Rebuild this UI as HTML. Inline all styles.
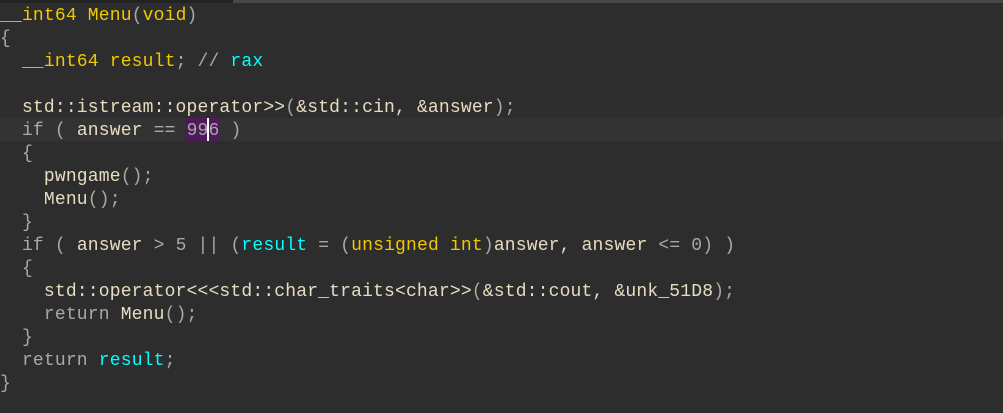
<!DOCTYPE html>
<html><head><style>
html,body{margin:0;padding:0;background:#2d2d2d;width:1003px;height:413px;overflow:hidden}
.top{position:absolute;left:0;top:0;width:1003px;height:3px;background:#222}
.top2{position:absolute;left:233px;top:0;width:770px;height:3px;background:#484848}
.hl{position:absolute;left:0;top:118px;width:1003px;height:23px;background:#333333}
.sel{position:absolute;left:185px;top:118px;width:34px;height:23px;background:#4f1a5c}
.cur{position:absolute;left:207px;top:118px;width:2px;height:23px;background:#fff}
pre{position:absolute;left:0;top:5px;margin:0;font-family:"Liberation Mono",monospace;font-size:18px;letter-spacing:0.17px;line-height:23px;color:#e6dcc0}
.y{color:#f0c800}.g{color:#a8a8a8}.c{color:#00ffff}
</style></head><body>
<div class="top"></div><div class="top2"></div><div class="hl"></div><div class="sel"></div>
<pre><span class="y">__int64 Menu</span><span class="g">(</span><span class="y">void</span><span class="g">)</span>
<span class="g">{</span>
  <span class="y">__int64 result</span><span class="g">; // </span><span class="c">rax</span>

  std::istream::operator&gt;&gt;<span class="g">(</span>&amp;std::cin, &amp;answer<span class="g">);</span>
  <span class="g">if (</span> answer <span class="g">==</span> <span class="g">996</span> <span class="g">)</span>
  <span class="g">{</span>
    pwngame<span class="g">();</span>
    Menu<span class="g">();</span>
  <span class="g">}</span>
  <span class="g">if (</span> answer <span class="g">&gt; 5 || (</span><span class="c">result</span> <span class="g">= (</span><span class="y">unsigned int</span><span class="g">)</span>answer, answer <span class="g">&lt;= 0) )</span>
  <span class="g">{</span>
    std::operator&lt;&lt;&lt;std::char_traits&lt;char&gt;&gt;<span class="g">(</span>&amp;std::cout, &amp;unk_51D8<span class="g">);</span>
    <span class="g">return</span> Menu<span class="g">();</span>
  <span class="g">}</span>
  <span class="g">return</span> <span class="c">result</span><span class="g">;</span>
<span class="g">}</span></pre>
<div class="cur"></div>
</body></html>
